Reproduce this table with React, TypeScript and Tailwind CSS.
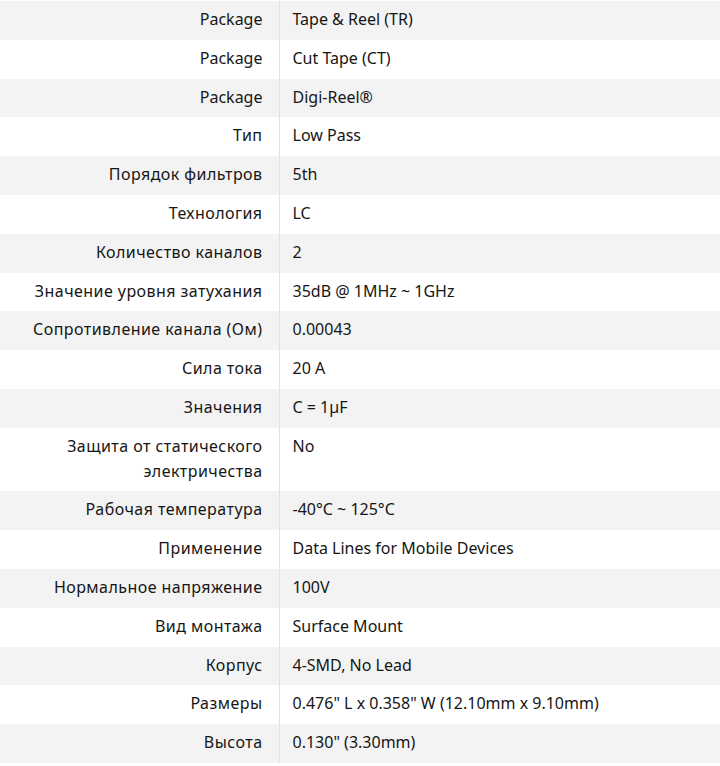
import React from 'react';

const rows: [string, string][] = [
  ['Package', 'Tape & Reel (TR)'],
  ['Package', 'Cut Tape (CT)'],
  ['Package', 'Digi-Reel®'],
  ['Тип', 'Low Pass'],
  ['Порядок фильтров', '5th'],
  ['Технология', 'LC'],
  ['Количество каналов', '2'],
  ['Значение уровня затухания', '35dB @ 1MHz ~ 1GHz'],
  ['Сопротивление канала (Ом)', '0.00043'],
  ['Сила тока', '20 A'],
  ['Значения', 'C = 1µF'],
  ['Защита от статического электричества', 'No'],
  ['Рабочая температура', '-40°C ~ 125°C'],
  ['Применение', 'Data Lines for Mobile Devices'],
  ['Нормальное напряжение', '100V'],
  ['Вид монтажа', 'Surface Mount'],
  ['Корпус', '4-SMD, No Lead'],
  ['Размеры', '0.476" L x 0.358" W (12.10mm x 9.10mm)'],
  ['Высота', '0.130" (3.30mm)'],
];

const isCyrillic = (s: string) => /[а-яА-Я]/.test(s);

const App: React.FC = () => {
  return (
    <div className="w-[720px] bg-white pt-px text-[16px] leading-[24.8px] text-[#161616] font-['Noto_Sans',sans-serif]">
      <table className="w-full border-collapse">
        <tbody>
          {rows.map(([label, value], i) => (
            <tr key={i} className={i % 2 === 0 ? 'bg-[#f3f3f3]' : 'bg-white'}>
              {/* label column */}
              <td
                className={`w-[279px] border-r border-[#e2e2e2] pt-[6px] pb-[8px] pl-2 pr-4 text-right align-top ${
                  isCyrillic(label) ? 'tracking-[0.45px]' : ''
                }`}
              >
                {label}
              </td>
              <td className="pt-[6px] pb-[8px] pl-[13px] pr-4 text-left align-top">{value}</td>
            </tr>
          ))}
        </tbody>
      </table>
    </div>
  );
};

export default App;
